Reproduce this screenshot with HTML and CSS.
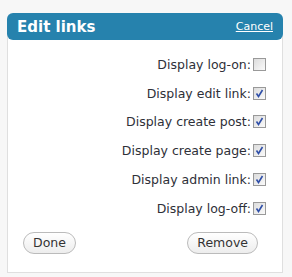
FILE: index.html
```html
<!DOCTYPE html>
<html>
<head>
<meta charset="utf-8">
<link rel="stylesheet" href="styles.css">
</head>
<body>
<div class="panel">
  <div class="header">
    <span class="title">Edit links</span>
    <a class="cancel" href="#">Cancel</a>
  </div>
  <div class="body">
    <div class="rows">
      <label class="row">Display log-on:<span class="cb"></span></label>
      <label class="row">Display edit link:<span class="cb"><svg viewBox="0 0 11 11" width="11" height="11"><path d="M2.5 5.5 L4.5 8.5 L8.5 2" fill="none" stroke="#2f4fa8" stroke-width="1.6"/></svg></span></label>
      <label class="row">Display create post:<span class="cb"><svg viewBox="0 0 11 11" width="11" height="11"><path d="M2.5 5.5 L4.5 8.5 L8.5 2" fill="none" stroke="#2f4fa8" stroke-width="1.6"/></svg></span></label>
      <label class="row">Display create page:<span class="cb"><svg viewBox="0 0 11 11" width="11" height="11"><path d="M2.5 5.5 L4.5 8.5 L8.5 2" fill="none" stroke="#2f4fa8" stroke-width="1.6"/></svg></span></label>
      <label class="row">Display admin link:<span class="cb"><svg viewBox="0 0 11 11" width="11" height="11"><path d="M2.5 5.5 L4.5 8.5 L8.5 2" fill="none" stroke="#2f4fa8" stroke-width="1.6"/></svg></span></label>
      <label class="row">Display log-off:<span class="cb"><svg viewBox="0 0 11 11" width="11" height="11"><path d="M2.5 5.5 L4.5 8.5 L8.5 2" fill="none" stroke="#2f4fa8" stroke-width="1.6"/></svg></span></label>
    </div>
    <div class="buttons">
      <button class="btn">Done</button>
      <button class="btn">Remove</button>
    </div>
  </div>
</div>
</body>
</html>
```

FILE: styles.css
```css
html, body {
  margin: 0;
  padding: 0;
  background: #f7f7f7;
}
body {
  padding: 13px 9px 0 7px;
  font-family: "DejaVu Sans", Verdana, sans-serif;
}
.panel {
  width: 276px;
}
.header {
  height: 27px;
  background: #2682ad;
  border-radius: 6px;
  display: flex;
  align-items: center;
  justify-content: space-between;
  padding: 0 10px 0 10px;
  box-sizing: border-box;
  position: relative;
  z-index: 1;
}
.title {
  color: #fff;
  font-weight: bold;
  font-size: 15px;
}
.cancel {
  color: #fff;
  font-size: 11px;
  text-decoration: underline;
}
.body {
  background: #fff;
  border: 1px solid #dfdfdf;
  border-top: none;
  margin-top: -4px;
  padding: 14px 0 18px 0;
}
.rows {
  display: flex;
  flex-direction: column;
  align-items: flex-end;
  padding-right: 16px;
}
.row {
  height: 28.8px;
  display: flex;
  align-items: center;
  gap: 2px;
  font-size: 12.5px;
  color: #2e3038;
}
.cb {
  width: 11px;
  height: 11px;
  border: 1px solid #999;
  background: linear-gradient(135deg, #dcdcdc, #fafafa);
  display: flex;
}
.buttons {
  display: flex;
  justify-content: space-between;
  padding: 0 24px 0 15px;
  margin-top: 9px;
}
.btn {
  height: 22px;
  border: 1px solid #bbb;
  border-radius: 11px;
  background: linear-gradient(#fff, #ededed);
  font-family: "DejaVu Sans", Verdana, sans-serif;
  font-size: 12.5px;
  color: #333;
  padding: 0 9px;
}
```
